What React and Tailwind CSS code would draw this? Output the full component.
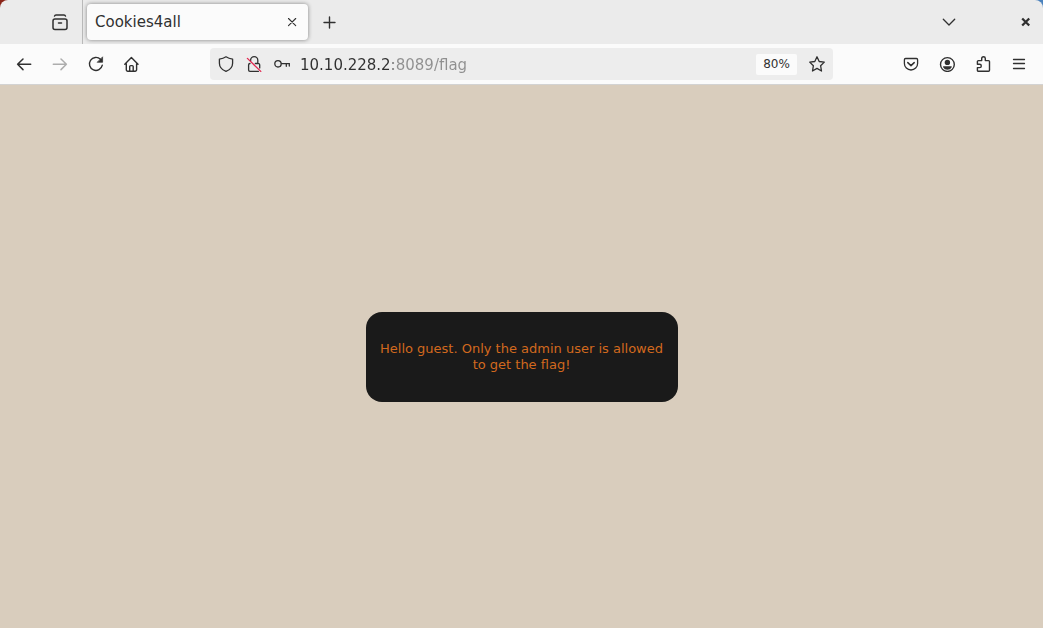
import React from "react";

function Icon({ children, className = "size-4", size = 16 }) {
  return (
    <svg
      viewBox={`0 0 ${size} ${size}`}
      className={className}
      fill="none"
      stroke="currentColor"
      strokeWidth="1.3"
      strokeLinecap="round"
      strokeLinejoin="round"
      aria-hidden="true"
    >
      {children}
    </svg>
  );
}

function IconButton({ label, className = "w-9", children, ...rest }) {
  return (
    <button
      type="button"
      aria-label={label}
      className={`flex h-8 shrink-0 items-center justify-center rounded ${className}`}
      {...rest}
    >
      {children}
    </button>
  );
}

function TabStrip() {
  return (
    <div className="bg-linear-to-r from-[#8a2418] to-[#4a82bd]">
      <div className="flex h-11 items-center rounded-t-lg bg-[#ebebeb]">
        <div className="flex h-11 w-[83px] shrink-0 items-center justify-end border-r border-[#b9b9b9] pr-1">
          <IconButton label="View recent browsing">
            <Icon size={18} className="size-[18px]">
              <path d="M3.500 3.100c.2-.7.700-1.100 1.500-1.100h8c.8 0 1.300.4 1.500 1.100" strokeWidth="1.400" />
              <rect x="2" y="6" width="14" height="10.400" rx="2" strokeWidth="1.500" />
              <path d="M7.500 10h3" strokeWidth="1.500" />
            </Icon>
          </IconButton>
        </div>
        <div className="ml-1 flex h-9 w-[221px] items-center justify-between rounded bg-[#fbfbfb] pr-1 pl-2 shadow-[0_0_4px_rgba(0,0,0,0.45)]">
          <span className="truncate text-[15px]">Cookies4all</span>
          <IconButton label="Close tab" className="w-6">
            <Icon>
              <path d="M4.500 4.500l7.200 7.200M11.700 4.500l-7.200 7.200" strokeWidth="1.100" />
            </Icon>
          </IconButton>
        </div>
        <IconButton label="New tab" className="ml-1 w-9">
          <Icon>
            <path d="M7.500 3v11M2 8.500h11" strokeWidth="1.400" />
          </Icon>
        </IconButton>
        <div className="ml-auto flex items-center gap-12 pr-2">
          <IconButton label="List all tabs">
            <Icon>
              <path d="M2.300 5.300L8 11l5.700-5.700" />
            </Icon>
          </IconButton>
          <IconButton label="Close window" className="w-5">
            <Icon>
              <path d="M5.200 4.500l7 7M12.200 4.500l-7 7" strokeWidth="2.300" strokeLinecap="butt" />
            </Icon>
          </IconButton>
        </div>
      </div>
    </div>
  );
}

function AddressBar() {
  return (
    <div className="mx-[60px] flex h-8 min-w-0 flex-1 items-center rounded bg-[#ededed] px-0.5">
      <IconButton label="Tracking protection" className="w-7">
        <Icon>
          <path d="M8 .8c1.900 1.300 4 2 6.600 2.300v4.100c0 3.500-2.500 6.500-6.600 8.200-4.100-1.700-6.600-4.700-6.600-8.200V3.100C4 2.800 6.100 2.100 8 .8z" />
        </Icon>
      </IconButton>
      <IconButton label="Connection is not secure" className="w-7">
        <Icon>
          <path d="M4.600 5V4.300a3.600 3.600 0 0 1 7.200 0V7.400M9.300 7.500h3a1.400 1.400 0 0 1 1.400 1.400v3M12.500 15.300H4a1.400 1.400 0 0 1-1.400-1.400V8.900A1.400 1.400 0 0 1 4 7.500" />
          <path d="M1.400 2.400l13.400 13" stroke="#e22850" />
        </Icon>
      </IconButton>
      <IconButton label="Saved logins" className="w-7">
        <Icon>
          <circle cx="4" cy="7.800" r="3.200" />
          <path d="M7.400 7.600h8.100M12.300 7.600v2.700M15.300 7.600v2.500" />
        </Icon>
      </IconButton>
      <input
        type="text"
        aria-label="Address"
        defaultValue="10.10.228.2:8089/flag"
        className="ml-1 h-full min-w-0 flex-1 bg-[linear-gradient(90deg,#303030_93px,#8f8f8f_93px)] bg-clip-text pt-0.5 text-[15px] text-transparent caret-[#303030] outline-none"
      />
      <button
        type="button"
        aria-label="Zoom level 80%"
        className="mr-1.5 h-[21px] w-[41px] shrink-0 rounded-xs bg-[#fbfbfb] text-center text-[12px]"
      >
        80%
      </button>
      <IconButton label="Bookmark this page" className="w-7">
        <Icon>
          <path d="M8 .8l2.200 4.700 5.100.600-3.700 3.600.900 5.300L8 12.400 3.500 15l.900-5.300L.7 6.100l5.100-.6z" />
        </Icon>
      </IconButton>
    </div>
  );
}

function Toolbar() {
  return (
    <nav className="flex items-center border-b border-[#d3d3d3] bg-[#fbfbfb] px-1.5 py-1">
      <IconButton label="Back">
        <Icon>
          <path d="M14.700 8.300H1.600M7 3L1.600 8.300 7 13.600" strokeWidth="1.500" />
        </Icon>
      </IconButton>
      <IconButton label="Forward" disabled className="w-9 text-[#adadad]">
        <Icon>
          <path d="M1.300 8.300h13.100M9 3l5.400 5.300L9 13.600" strokeWidth="1.500" />
        </Icon>
      </IconButton>
      <IconButton label="Reload">
        <Icon>
          <path d="M14.300 9.200A6.500 6.500 0 1 1 12.500 3.300" strokeWidth="1.400" />
          <path d="M14.600 1.200v5.100H9.500z" fill="currentColor" strokeWidth="0.700" />
        </Icon>
      </IconButton>
      <IconButton label="Home">
        <Icon>
          <path d="M.8 8.300l6.600-6.700 6.600 6.700M2.300 7.400v6.400a1.400 1.400 0 0 0 1.400 1.400h7.500a1.400 1.400 0 0 0 1.400-1.400V7.400M5.700 15v-4.400a1 1 0 0 1 1-1h1.500a1 1 0 0 1 1 1V15" strokeWidth="1.400" />
        </Icon>
      </IconButton>
      <AddressBar />
      <IconButton label="Save to Pocket">
        <Icon>
          <path d="M2.600 2.500h10.800A1.200 1.200 0 0 1 14.600 3.700v3.700a6.600 6.600 0 0 1-13.200 0V3.700A1.200 1.200 0 0 1 2.600 2.500z" />
          <path d="M4.800 6.600L8 9.600l3.200-3" strokeWidth="1.500" />
        </Icon>
      </IconButton>
      <IconButton label="Account">
        <Icon>
          <circle cx="8.400" cy="8.500" r="6.900" strokeWidth="1.400" />
          <circle cx="8.400" cy="6.400" r="2.700" fill="currentColor" stroke="none" />
          <path d="M4.700 10.300h7.400c.5 0 .8.4.6.9a4.900 4.900 0 0 1-8.600 0c-.2-.5.1-.9.600-.9z" fill="currentColor" stroke="none" />
        </Icon>
      </IconButton>
      <IconButton label="Extensions">
        <Icon>
          <path d="M6.700 4.600V2.500a1.800 1.800 0 0 1 3.600 0v2.100h3.200a1 1 0 0 1 1 1v8.700a1 1 0 0 1-1 1H3.400a1 1 0 0 1-1-1V11.600h2.200a1.700 1.700 0 0 0 0-3.400H2.400V5.600a1 1 0 0 1 1-1z" strokeWidth="1.400" />
        </Icon>
      </IconButton>
      <IconButton label="Open application menu">
        <Icon>
          <path d="M2.500 3.500h11M2.500 7.500h11M2.500 12.500h11" strokeWidth="1.300" />
        </Icon>
      </IconButton>
    </nav>
  );
}

export default function App() {
  return (
    <div className="flex min-h-screen flex-col bg-[#d9cdbd] font-['DejaVu_Sans',sans-serif] text-[#303030]">
      <header>
        <TabStrip />
        <Toolbar />
      </header>
      <main className="flex flex-1 items-center justify-center">
        <section className="w-full max-w-[312px] rounded-2xl bg-[#1a1a1a] px-3 py-[29px] text-center text-[13px] leading-4 text-[#d2691e]">
          <p>Hello guest. Only the admin user is allowed to get the flag!</p>
        </section>
      </main>
    </div>
  );
}
